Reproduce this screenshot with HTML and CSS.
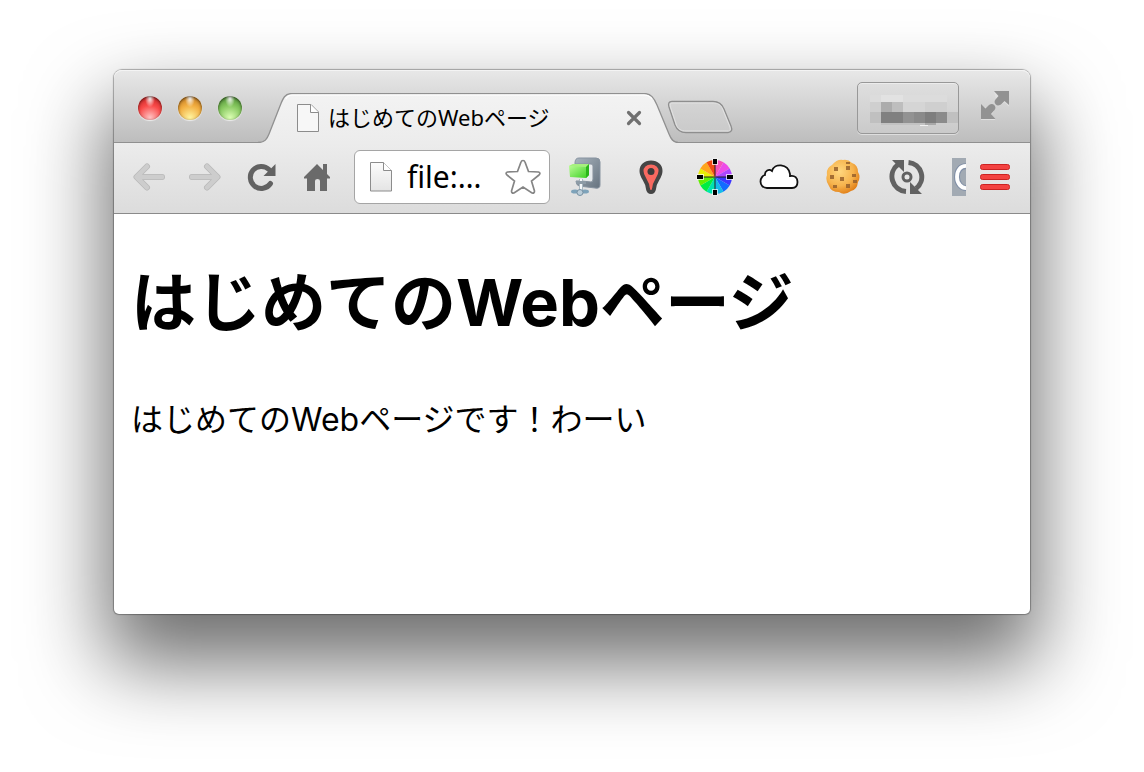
FILE: index.html
```html
<!DOCTYPE html>
<html lang="ja">
<head>
<meta charset="utf-8">
<title>はじめてのWebページ</title>
<link rel="stylesheet" href="styles.css">
</head>
<body>
<div class="window">
  <header class="tabstrip">
    <div class="lights">
      <button class="light red" aria-label="閉じる"></button>
      <button class="light amber" aria-label="しまう"></button>
      <button class="light green" aria-label="拡大"></button>
    </div>
    <div class="tab">
      <svg class="tab-shape" width="420" height="50" viewBox="0 0 420 50" aria-hidden="true">
        <defs><linearGradient id="tabfill" x1="0" y1="0" x2="0" y2="1"><stop offset="0" stop-color="#f3f3f3"/><stop offset="1" stop-color="#ececec"/></linearGradient></defs>
        <path d="M0 50V49.500C7 49.500 9 46 11 41L22 13C25 5 27 .5 34 .5H386C393 .5 396 5 399 12L411 41C413 46 415 49.500 420 49.500V50Z" fill="url(#tabfill)"/>
        <path d="M0 49.500C7 49.500 9 46 11 41L22 13C25 5 27 .5 34 .5H386C393 .5 396 5 399 12L411 41C413 46 415 49.500 420 49.500" fill="none" stroke="#909090" stroke-width="1.300"/>
        <path d="M28 6Q30 2 34 2H386Q391 2 394 6" fill="none" stroke="#fff" stroke-width="1.200"/>
      </svg>
      <svg class="page-icon" width="24" height="30" viewBox="0 0 24 30" aria-hidden="true"><path d="M1.500 1.500H15L22.500 9V28.500H1.500Z" fill="#f7f7f7" stroke="#8c8c8c"/><path d="M14.500 1.500V9.500H22.500" fill="#fff" stroke="#8c8c8c"/></svg>
      <span class="tab-title">はじめてのWebページ</span>
      <button class="tab-close" aria-label="タブを閉じる"><svg width="16" height="16" viewBox="0 0 16 16"><path d="M2.500 2.500L13.500 13.500M13.500 2.500L2.500 13.500" stroke="#707070" stroke-width="3.200" stroke-linecap="round"/></svg></button>
    </div>
    <button class="new-tab" aria-label="新しいタブ"><svg width="66" height="34" viewBox="0 0 66 34"><defs><linearGradient id="nt" x1="0" y1="0" x2="0" y2="1"><stop offset="0" stop-color="#d4d4d4"/><stop offset="1" stop-color="#cacaca"/></linearGradient></defs><path d="M5 1.500H46C52 1.500 55 4 57 9L64 26C65.500 30 65 32 61 32.500H19C13 32.500 10 30 8 25L2 7C1 3.500 1.500 1.500 5 1.500Z" fill="url(#nt)" stroke="#8e8e8e" stroke-width="1.300"/><path d="M5 3H46C51 3 54 5 55.500 9L62.500 26C64 30 63 31 61 31H19C14 31 11 29 9.500 25L3.500 7C3 4 3 3 5 3Z" fill="none" stroke="#e2e2e2"/></svg></button>
    <div class="strip-end">
      <button class="profile" aria-label="プロフィール">
        <svg width="88" height="34" viewBox="0 0 88 34" shape-rendering="crispEdges">
          <path fill="#dcdcdc" d="M0 1h77v7H0z"/><path fill="#e2e2e2" d="M11 1h22v7H11z"/>
          <path fill="#cfcfcf" d="M0 8h77v10H0z"/><path fill="#acacac" d="M11 8h11v10H11z"/><path fill="#bebebe" d="M22 8h11v10H22z"/><path fill="#d5d5d5" d="M33 8h22v10H33z"/>
          <path fill="#c0c0c0" d="M0 18h88v11H0z"/><path fill="#808080" d="M11 18h22v11H11z"/><path fill="#929292" d="M33 18h11v11H33z"/><path fill="#8a8a8a" d="M44 18h11v11H44z"/><path fill="#7e7e7e" d="M55 18h11v11H55z"/><path fill="#8b8b8b" d="M66 18h11v11H66z"/>
          <path fill="#c2c2c2" d="M11 29h44v2H11z"/><path fill="#a8a8a8" d="M55 29h11v2H55z"/><path fill="#f0f0f0" d="M50 31h8v1H50z"/>
        </svg>
      </button>
      <button class="expand" aria-label="フルスクリーン"><svg width="30" height="30" viewBox="0 0 30 30"><path d="M14 2.500H29V16.500L24.500 12.500L18.500 16.500ZM1 15.500V30H15.500L11 25.500L14 21Z" fill="#e0e0e0"/><path d="M14 1H29V15L24.500 11L21 14.500Q18 16.500 15.800 14.500Q13.500 12 15.500 9.500L18.500 6Z" fill="#929292"/><path d="M1 14L5.500 18.500L9 15Q12 13 14.200 15Q16.500 17.500 14.500 20L11 24L15.500 29H1Z" fill="#929292"/></svg></button>
    </div>
  </header>
  <nav class="toolbar" aria-label="ツールバー">
    <div class="nav-buttons">
      <button aria-label="戻る"><svg width="32" height="28" viewBox="0 0 32 28"><path d="M4 14H29M14 3.500L3.500 14L14 24.500" fill="none" stroke="#b9b9b9" stroke-width="6" stroke-linecap="round" stroke-linejoin="round"/><path d="M4 14H29M14 3.500L3.500 14L14 24.500" fill="none" stroke="#cdcdcd" stroke-width="4.500" stroke-linecap="round" stroke-linejoin="round"/></svg></button>
      <button aria-label="進む"><svg width="32" height="28" viewBox="0 0 32 28"><path d="M28 14H3M18 3.500L28.500 14L18 24.500" fill="none" stroke="#b9b9b9" stroke-width="6" stroke-linecap="round" stroke-linejoin="round"/><path d="M28 14H3M18 3.500L28.500 14L18 24.500" fill="none" stroke="#cdcdcd" stroke-width="4.500" stroke-linecap="round" stroke-linejoin="round"/></svg></button>
      <button aria-label="再読み込み"><svg width="30" height="30" viewBox="0 0 30 30"><path d="M24.500 21.500A11 11 0 1 1 23 7.500" fill="none" stroke="#626262" stroke-width="5" stroke-linecap="round"/><path d="M29.500 2V14H17.500Z" fill="#626262"/></svg></button>
      <button aria-label="ホーム"><svg width="28" height="30" viewBox="0 0 28 30"><path d="M14 2L20 8V2H24V12L27 15V16.500H24V29H17V19Q17 17 14.500 17Q12 17 12 19V29H4V16.500H1V15Z" fill="#6a6a6a"/></svg></button>
    </div>
    <label class="omnibox">
      <svg width="24" height="32" viewBox="0 0 24 32" aria-hidden="true"><defs><linearGradient id="pg" x1="0" y1="0" x2="0" y2="1"><stop offset="0" stop-color="#fcfcfc"/><stop offset="1" stop-color="#e4e4e4"/></linearGradient></defs><path d="M1.500 1.500H14.500L22.500 9.500V30H1.500Z" fill="url(#pg)" stroke="#8c8c8c"/><path d="M14.500 1.500V9.500H22.500" fill="#fff" stroke="#8c8c8c"/></svg>
      <input type="text" value="file:…" aria-label="アドレス">
      <svg width="36" height="36" viewBox="0 0 36 36" aria-hidden="true"><path d="M18 1.500Q19.500 1.500 20 3L23.500 12.500L33.500 13Q36 14 34 16L26.500 22L29.500 32Q29.500 34.500 27 34L18 28L9 34Q6.500 34.500 6.500 32L9.500 22L2 16Q0 14 2.500 13L12.500 12.500L16 3Q16.500 1.500 18 1.500Z" fill="#fff" stroke="#858585" stroke-width="1.700"/></svg>
    </label>
    <div class="extensions">
      <button aria-label="圧縮"><svg width="36" height="40" viewBox="2 0 36 40"><defs><linearGradient id="clamp" x1="0" y1="0" x2="1" y2="1"><stop offset="0" stop-color="#a9b4be"/><stop offset="1" stop-color="#66737f"/></linearGradient><linearGradient id="cube" x1="0" y1="0" x2="1" y2="1"><stop offset="0" stop-color="#c3ff9d"/><stop offset="1" stop-color="#35cf1e"/></linearGradient></defs><path d="M8 6Q8 1 12 1H29Q33 1 33 5V28Q33 32 28 31L12 29Q9 28 9 24H15L24 25Q26 25 26 22V9Q26 7 24 7H8Z" fill="url(#clamp)" stroke="#8793a0"/><path d="M17 8H25V24L15 23Z" fill="#e6eaed"/><path d="M12 22H16V37H12Z" fill="#a9b7c0"/><path d="M13 22H15V36H13Z" fill="#f4f7f9"/><path d="M9 24H19V27H9Z" fill="#8d9ba6"/><path d="M2 9L6 7L22 7V18L19 21L3 20Z" fill="url(#cube)"/><path d="M2 9L6 7L22 7L19 10Z" fill="#a6f07e"/><path d="M19 10L22 7V18L19 21Z" fill="#2ab61a"/><ellipse cx="8" cy="34.500" rx="4" ry="2" fill="#7ea3ba"/><ellipse cx="18" cy="34.500" rx="4" ry="2" fill="#7ea3ba"/><circle cx="13" cy="35.500" r="3" fill="#bacdd9" stroke="#7891a2"/></svg></button>
      <button aria-label="地図"><svg width="28" height="38" viewBox="0 0 28 38"><path d="M14 4.500C8 4.500 4.500 8.500 4.500 13C4.500 20 10.500 22 11 31Q11.500 34 14 34Q16.500 34 17 31C17.500 22 23.500 20 23.500 13C23.500 8.500 20 4.500 14 4.500Z" fill="#f96960" stroke="#454545" stroke-width="4"/><circle cx="14" cy="13.500" r="3.500" fill="#3b3b3b"/></svg></button>
      <button aria-label="カラーピッカー"><svg width="38" height="38" viewBox="0 0 38 38"><g><path d="M19 19V2A17 17 0 0 1 27.500 4.300Z" fill="#f653b9"/><path d="M19 19L27.500 4.300A17 17 0 0 1 33.700 10.500Z" fill="#ed4be7"/><path d="M19 19L33.700 10.500A17 17 0 0 1 36 19Z" fill="#ad45ff"/><path d="M19 19H36A17 17 0 0 1 33.700 27.500Z" fill="#3d36ff"/><path d="M19 19L33.700 27.500A17 17 0 0 1 27.500 33.700Z" fill="#126bff"/><path d="M19 19L27.500 33.700A17 17 0 0 1 19 36Z" fill="#14bbe9"/><path d="M19 19V36A17 17 0 0 1 10.500 33.700Z" fill="#00e3b1"/><path d="M19 19L10.500 33.700A17 17 0 0 1 4.300 27.500Z" fill="#00ed43"/><path d="M19 19L4.300 27.500A17 17 0 0 1 2 19Z" fill="#63ee00"/><path d="M19 19H2A17 17 0 0 1 4.300 10.500Z" fill="#e9ed05"/><path d="M19 19L4.300 10.500A17 17 0 0 1 10.500 4.300Z" fill="#ffa51d"/><path d="M19 19L10.500 4.300A17 17 0 0 1 19 2Z" fill="#f34b13"/></g><path d="M19 5V33M5 19H33" stroke="#222" stroke-opacity=".65" stroke-width="1.500"/><path d="M16 .5H22V7H16ZM16 31H22V37.500H16ZM.5 16H8V22H.5ZM30 16H37.500V22H30Z" fill="#fff" fill-opacity=".7"/><path d="M17 1H21V6H17ZM17 32H21V37H17ZM1 17H7V21H1ZM31 17H37V21H31Z" fill="#000"/></svg></button>
      <button aria-label="クラウド"><svg width="40" height="28" viewBox="0 0 40 28"><path d="M8 25C4 25 1.500 22 1.500 18.500C1.500 15 4 12.500 6 12C5.500 8 10 5.500 13 8C15 0 29 0 31 11C31 12 31 12 31 13C36 12 38.500 15 38.500 19C38.500 23 36 25 33 25Z" fill="#fff" stroke="#111" stroke-width="1.800"/></svg></button>
      <button aria-label="クッキー"><svg width="36" height="36" viewBox="0 0 36 36"><defs><radialGradient id="cookie" cx=".4" cy=".35" r=".7"><stop offset="0" stop-color="#ffd77f"/><stop offset=".6" stop-color="#f6b34d"/><stop offset="1" stop-color="#df7a12"/></radialGradient></defs><path d="M18 1Q23 0 27 4Q33 6 33 13Q36 18 33 23Q32 31 26 32Q19 37 14 33Q6 33 4 27Q0 21 2 16Q1 9 7 6Q12 0 18 1Z" fill="url(#cookie)"/><path d="M9 8h4v4H9zM21 7h4v4h-4zM5 16h4v4H5zM15 18h4v4h-4zM27 15h4v3h-4zM8 26h4v3H8zM21 25h4v4h-4zM21 3h4v2h-4zM28 21h4v3h-4z" fill="#96602b" fill-opacity=".85"/></svg></button>
      <button aria-label="同期"><svg width="36" height="38" viewBox="0 0 36 38"><path d="M9 6.500A15 15 0 0 0 17 33.500M19.500 4.500A14.500 14.500 0 0 1 27 30.500" fill="none" stroke="#626262" stroke-width="5"/><path d="M3 2H15V14ZM33 36H21V24Z" fill="#626262"/><circle cx="18" cy="19" r="4" fill="#e8e8e8" stroke="#626262" stroke-width="3"/></svg></button>
    </div>
    <button class="clipped" aria-label="拡張機能"><svg width="14" height="38" viewBox="0 0 14 38"><path d="M0 0H14V38H0Z" fill="#a2aab3"/><path d="M16 8.500C8 7 5 13 5 19S9 31 16 30" fill="none" stroke="#8290a7" stroke-width="6"/><path d="M16 8C8 7 5 13 5 19S9 31 16 30" fill="none" stroke="#fff" stroke-width="3.800"/></svg></button>
    <button class="menu" aria-label="メニュー"><svg width="30" height="28" viewBox="0 0 30 28"><g fill="#f34241" stroke="#cc2222"><rect x=".5" y="1.500" width="29" height="5" rx="2"/><rect x=".5" y="11.500" width="29" height="5" rx="2"/><rect x=".5" y="21.500" width="29" height="5" rx="2"/></g></svg></button>
  </nav>
  <main class="content">
    <h1>はじめてのWebページ</h1>
    <p>はじめてのWebページです！わーい</p>
  </main>
</div>
</body>
</html>
```
FILE: styles.css
```css
* { box-sizing: border-box; }
body {
  margin: 0;
  min-height: 100vh;
  padding: 70px 114px 158px;
  display: flex;
  background: #fff;
  color: #000;
  overflow: hidden;
  font-family: "Noto Sans", "Noto Sans CJK JP", sans-serif;
}
button { border: 0; padding: 0; background: none; display: flex; align-items: center; justify-content: center; }
svg { display: block; flex: none; }
.window {
  flex: 1;
  min-width: 0;
  display: flex;
  flex-direction: column;
  border-radius: 8px 8px 5px 5px;
  background: #fff;
  box-shadow: 0 0 1px 1px rgba(0,0,0,.3), 0 42px 80px 8px rgba(0,0,0,.57);
}
.tabstrip {
  height: 73px;
  display: flex;
  align-items: flex-end;
  padding-right: 20px;
  border-bottom: 1px solid #909090;
  border-radius: 8px 8px 0 0;
  background: linear-gradient(#e8e8e8, #bdbdbd);
  box-shadow: inset 0 1px #f4f4f4;
}
.lights { align-self: center; display: flex; gap: 16px; padding: 4px 0 0 24px; width: 144px; }
.light { width: 24px; height: 24px; border-radius: 50%; box-shadow: inset 0 1px 3px rgba(0,0,0,.6), 0 1px 1px #ededed; }
.red { background: radial-gradient(ellipse at 50% 8%, #fff 0, transparent 30%), radial-gradient(circle at 50% 90%, #ffc3c3 0, #f94a49 50%, #b91c1c 100%); }
.amber { background: radial-gradient(ellipse at 50% 8%, #fff 0, transparent 30%), radial-gradient(circle at 50% 90%, #fff5a0 0, #f2ae41 50%, #b56c18 100%); }
.green { background: radial-gradient(ellipse at 50% 8%, #fff 0, transparent 30%), radial-gradient(circle at 50% 90%, #dcffb4 0, #86c75f 50%, #40802a 100%); }
.tab { position: relative; width: 420px; height: 50px; margin-bottom: -1px; padding: 0 36px 0 38px; display: flex; align-items: center; }
.tab-shape { position: absolute; inset: 0; }
.page-icon, .tab-title, .tab-close { position: relative; }
.tab-title { flex: 1; margin-left: 8px; padding-bottom: 2px; font-size: 22px; line-height: 30px; white-space: nowrap; }
.new-tab { margin: 0 0 8px -11px; }
.strip-end { margin-left: auto; display: flex; gap: 21px; align-items: center; padding-bottom: 8px; }
.profile { width: 102px; height: 52px; border: 1px solid #989898; border-radius: 5px; background: linear-gradient(#dfdfdf, #cacaca); box-shadow: inset 0 1px #ececec, 0 1px #dedede; padding: 5px 0 0 12px; }
.expand { margin-bottom: 6px; }
.toolbar {
  height: 71px;
  display: flex;
  align-items: center;
  padding: 0 20px 3px 7px;
  border-bottom: 1px solid #8a8a8a;
  background: linear-gradient(#ececec, #dcdcdc);
}
.nav-buttons, .extensions { display: flex; }
.nav-buttons button { width: 56px; height: 56px; }
.omnibox {
  flex: 1;
  min-width: 0;
  height: 54px;
  margin: 0 5px 0 9px;
  padding: 0 8px 0 14px;
  display: flex;
  align-items: center;
  border: 1px solid #a5a5a5;
  border-radius: 6px;
  background: #fff;
}
.omnibox input { flex: 1; min-width: 0; width: 0; border: 0; padding: 0; margin-left: 14px; outline: 0; background: none; color: #000; font: 30px/40px "Noto Sans", "Noto Sans CJK JP", sans-serif; }
.extensions button { width: 64px; height: 56px; }
.clipped { margin: 0 14px 0 13px; }
.content { flex: 1; padding: 42px 17px; font-family: Inter, "Noto Sans CJK JP", sans-serif; }
h1 { margin: 0; font-size: 65px; line-height: 94px; font-weight: 700; }
p { margin: 46px 0 0; font-size: 32px; line-height: 48px; }
```
